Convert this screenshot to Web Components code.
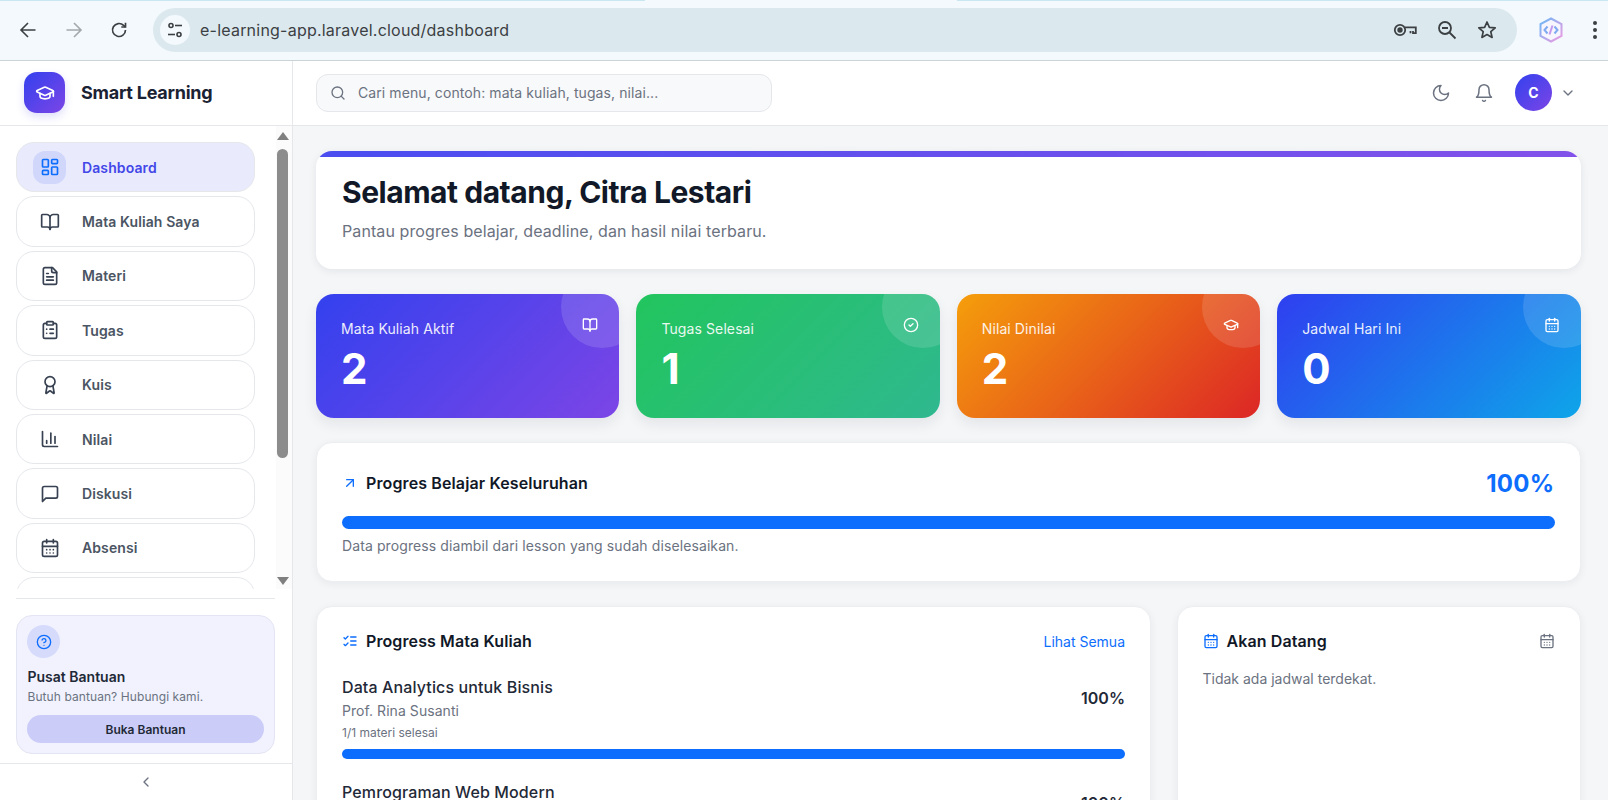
<!DOCTYPE html>
<html lang="id">
<head>
<meta charset="utf-8">
<title>Smart Learning</title>
<style>
  html, body { margin: 0; height: 100%; overflow: hidden; }
  body { font-family: Inter, "Liberation Sans", sans-serif; display: flex; flex-direction: column; background: #f5f6f8; }
</style>
</head>
<body>
<browser-bar url="e-learning-app.laravel.cloud/dashboard"></browser-bar>
<app-shell>
  <app-sidebar slot="side">
    <nav-item icon="dashboard" active>Dashboard</nav-item>
    <nav-item icon="book">Mata Kuliah Saya</nav-item>
    <nav-item icon="file">Materi</nav-item>
    <nav-item icon="clipboard">Tugas</nav-item>
    <nav-item icon="award">Kuis</nav-item>
    <nav-item icon="chart">Nilai</nav-item>
    <nav-item icon="message">Diskusi</nav-item>
    <nav-item icon="calendar">Absensi</nav-item>
    <nav-item icon="bell"></nav-item>
  </app-sidebar>
  <app-header slot="head"></app-header>
  <hero-card name="Citra Lestari">Pantau progres belajar, deadline, dan hasil nilai terbaru.</hero-card>
  <div style="display:grid;grid-template-columns:repeat(4,1fr);gap:17px;margin-top:25px">
    <stat-card label="Mata Kuliah Aktif" value="2" icon="book" bg="linear-gradient(135deg,#3341ee,#7c45e6)"></stat-card>
    <stat-card label="Tugas Selesai" value="1" icon="check" bg="linear-gradient(135deg,#22c55e,#2fb88f)"></stat-card>
    <stat-card label="Nilai Dinilai" value="2" icon="cap" bg="linear-gradient(135deg,#f59e0b,#dc2626)"></stat-card>
    <stat-card label="Jadwal Hari Ini" value="0" icon="calendar" bg="linear-gradient(135deg,#2f3ff0,#0ea5e9)"></stat-card>
  </div>
  <progress-card style="margin-top:24px" percent="100%" title="Progres Belajar Keseluruhan">Data progress diambil dari lesson yang sudah diselesaikan.</progress-card>
  <div style="display:grid;grid-template-columns:835fr 404fr;gap:25.5px;margin-top:24px">
    <panel-card title="Progress Mata Kuliah" icon="list" link="Lihat Semua">
      <course-item name="Data Analytics untuk Bisnis" teacher="Prof. Rina Susanti" done="1/1 materi selesai" percent="100%"></course-item>
      <course-item name="Pemrograman Web Modern" percent="100%"></course-item>
    </panel-card>
    <panel-card title="Akan Datang" icon="calendar" side-icon="calendar">
      <p style="margin:-6px 0 0;font-size:14px;line-height:20px;color:#6b7280">Tidak ada jadwal terdekat.</p>
    </panel-card>
  </div>
</app-shell>

<script>
const ICONS = {
  cap: '<path d="M21.42 10.922a1 1 0 0 0-.019-1.838L12.83 5.18a2 2 0 0 0-1.66 0L2.6 9.08a1 1 0 0 0 0 1.832l8.57 3.908a2 2 0 0 0 1.66 0z"/><path d="M22 10v6"/><path d="M6 12.5V16a6 3 0 0 0 12 0v-3.5"/>',
  dashboard: '<rect width="7" height="9" x="3" y="3" rx="1"/><rect width="7" height="5" x="14" y="3" rx="1"/><rect width="7" height="9" x="14" y="12" rx="1"/><rect width="7" height="5" x="3" y="16" rx="1"/>',
  book: '<path d="M12 7v14"/><path d="M3 18a1 1 0 0 1-1-1V4a1 1 0 0 1 1-1h5a4 4 0 0 1 4 4 4 4 0 0 1 4-4h5a1 1 0 0 1 1 1v13a1 1 0 0 1-1 1h-6a3 3 0 0 0-3 3 3 3 0 0 0-3-3z"/>',
  file: '<path d="M15 2H6a2 2 0 0 0-2 2v16a2 2 0 0 0 2 2h12a2 2 0 0 0 2-2V7Z"/><path d="M14 2v4a2 2 0 0 0 2 2h4"/><path d="M10 9H8"/><path d="M16 13H8"/><path d="M16 17H8"/>',
  clipboard: '<rect width="8" height="4" x="8" y="2" rx="1"/><path d="M16 4h2a2 2 0 0 1 2 2v14a2 2 0 0 1-2 2H6a2 2 0 0 1-2-2V6a2 2 0 0 1 2-2h2"/><path d="M12 11h4"/><path d="M12 16h4"/><path d="M8 11h.01"/><path d="M8 16h.01"/>',
  award: '<path d="m15.477 12.89 1.515 8.526a.5.5 0 0 1-.81.47l-3.58-2.687a1 1 0 0 0-1.197 0l-3.586 2.686a.5.5 0 0 1-.81-.469l1.514-8.526"/><circle cx="12" cy="8" r="6"/>',
  chart: '<path d="M3 3v16a2 2 0 0 0 2 2h16"/><path d="M18 17V9"/><path d="M13 17V5"/><path d="M8 17v-3"/>',
  message: '<path d="M21 15a2 2 0 0 1-2 2H7l-4 4V5a2 2 0 0 1 2-2h14a2 2 0 0 1 2 2z"/>',
  calendar: '<path d="M8 2v4"/><path d="M16 2v4"/><rect width="18" height="18" x="3" y="4" rx="2"/><path d="M3 10h18"/><path d="M8 14h.01"/><path d="M12 14h.01"/><path d="M16 14h.01"/><path d="M8 18h.01"/><path d="M12 18h.01"/><path d="M16 18h.01"/>',
  search: '<path d="m21 21-4.3-4.3"/><circle cx="11" cy="11" r="8"/>',
  moon: '<path d="M12 3a6 6 0 0 0 9 9 9 9 0 1 1-9-9Z"/>',
  bell: '<path d="M6 8a6 6 0 0 1 12 0c0 7 3 9 3 9H3s3-2 3-9"/><path d="M10.3 21a1.94 1.94 0 0 0 3.4 0"/>',
  down: '<path d="m6 9 6 6 6-6"/>',
  left: '<path d="m15 18-6-6 6-6"/>',
  help: '<circle cx="12" cy="12" r="10"/><path d="M9.09 9a3 3 0 0 1 5.83 1c0 2-3 3-3 3"/><path d="M12 17h.01"/>',
  check: '<circle cx="12" cy="12" r="10"/><path d="m9 12 2 2 4-4"/>',
  trend: '<path d="M7 7h10v10"/><path d="M7 17 17 7"/>',
  list: '<path d="m3 17 2 2 4-4"/><path d="m3 7 2 2 4-4"/><path d="M13 6h8"/><path d="M13 12h8"/><path d="M13 18h8"/>'
};
function icon(name, size, stroke) {
  return `<svg width="${size}" height="${size}" viewBox="0 0 24 24" fill="none" stroke="currentColor" stroke-width="${stroke || 2}" stroke-linecap="round" stroke-linejoin="round" style="display:block;flex:none">${ICONS[name]}</svg>`;
}

class BrowserBar extends HTMLElement {
  constructor() {
    super();
    this.attachShadow({ mode: 'open' });
  }
  connectedCallback() {
    this.shadowRoot.innerHTML = `
      <style>
        :host { display: flex; align-items: center; flex: none; height: 60px; background: linear-gradient(90deg,#c9e7f0 645px,#f3f9fd 645px,#f3f9fd 957px,#c9e7f0 957px) top / 100% 1px no-repeat #f3f9fd; border-bottom: 1px solid #c9d3d8; color: #3c4043; }
        .nav { display: flex; align-items: center; gap: 27.5px; padding-left: 19px; width: 134px; box-sizing: border-box; flex: none; }
        .omni { flex: none; width: 1364px; height: 44px; margin-left: 19px; box-sizing: border-box; border-radius: 22px; background: #dbe9ef; display: flex; align-items: center; padding: 0 20px 0 7px; }
        .tune { width: 30px; height: 30px; border-radius: 50%; background: #f3f9fd; display: flex; align-items: center; justify-content: center; }
        .url { font: 400 16px Inter, sans-serif; letter-spacing: .22px; margin-left: 10px; flex: 1; color: #3c4043; }
        .acts { display: flex; align-items: center; }
        .acts .z { margin: 0 20px; }
        .ext { margin-left: 22px; }
        .dots { margin-left: 29px; }
      </style>
      <div class="nav">
        <svg width="18" height="18" viewBox="0 0 18 18" fill="none" stroke="#3c4043" stroke-width="1.6"><path d="M16.5 9H2M9 2 2 9l7 7"/></svg>
        <svg width="18" height="18" viewBox="0 0 18 18" fill="none" stroke="#a3a8ab" stroke-width="1.6"><path d="M1.5 9H16M9 2l7 7-7 7"/></svg>
        <svg width="18" height="18" viewBox="0 0 18 18" fill="none" stroke="#3c4043" stroke-width="1.7"><path d="M15.5 9a6.5 6.5 0 1 1-1.9-4.6L15.5 6"/><path d="M15.5 1.8V6h-4.2"/></svg>
      </div>
      <div class="omni">
        <div class="tune"><svg width="18" height="18" viewBox="0 0 18 18" fill="none" stroke="#3c4043" stroke-width="1.6"><circle cx="5" cy="4.5" r="2"/><path d="M9 4.5h7"/><circle cx="13" cy="13.5" r="2"/><path d="M2 13.5h7"/></svg></div>
        <span class="url">${this.getAttribute('url')}</span>
        <div class="acts">
          <svg width="24" height="14" viewBox="0 0 24 14" fill="none" stroke="#3c4043" stroke-width="1.8"><circle cx="7" cy="7" r="5.2"/><circle cx="7" cy="7" r="1.8" fill="#3c4043"/><path d="M12 4.4h10.8v5.8H20V8M17.5 10.2V8"/></svg>
          <svg class="z" width="20" height="20" viewBox="0 0 20 20" fill="none" stroke="#3c4043" stroke-width="1.8"><circle cx="8" cy="8" r="6"/><path d="M5 8h6M12.5 12.5l6 6"/></svg>
          <svg width="20" height="20" viewBox="0 0 20 20" fill="none" stroke="#3c4043" stroke-width="1.7" stroke-linejoin="round"><path d="m10 2 2.4 5.3 5.8.6-4.4 3.8 1.3 5.7L10 14.5l-5.1 2.9 1.3-5.7L1.8 7.9l5.8-.6z"/></svg>
        </div>
      </div>
      <svg class="ext" width="24" height="26" viewBox="0 0 24 26" fill="none" stroke-width="2">
        <defs><linearGradient id="g" x1="0" y1="0" x2="1" y2="1"><stop offset="0" stop-color="#6ab8f5"/><stop offset="1" stop-color="#f29ae2"/></linearGradient></defs>
        <path d="M12 1.5 22.5 7.2v11.6L12 24.5 1.5 18.8V7.2z" stroke="url(#g)" fill="#f7f6fe"/>
        <path d="M8.5 9.5 5.5 13l3 3.5M15.5 9.5l3 3.5-3 3.5" stroke="#7fa9f0"/><path d="m13.5 8.5-3 9" stroke="#c49aee"/>
      </svg>
      <svg class="dots" width="6" height="20" viewBox="0 0 6 20" fill="#3c4043"><circle cx="3" cy="3" r="2"/><circle cx="3" cy="10" r="2"/><circle cx="3" cy="17" r="2"/></svg>
    `;
  }
}
customElements.define('browser-bar', BrowserBar);

class AppShell extends HTMLElement {
  constructor() {
    super();
    this.attachShadow({ mode: 'open' });
    this.shadowRoot.innerHTML = `
      <style>
        :host { display: flex; flex: 1; min-height: 0; overflow: hidden; }
        .main { flex: 1; min-width: 0; display: flex; flex-direction: column; }
        .content { flex: 1; min-height: 0; overflow: hidden; padding: 25px 27.5px 0 23px; }
      </style>
      <slot name="side"></slot>
      <div class="main">
        <slot name="head"></slot>
        <div class="content"><slot></slot></div>
      </div>
    `;
  }
}
customElements.define('app-shell', AppShell);

class AppSidebar extends HTMLElement {
  constructor() {
    super();
    this.attachShadow({ mode: 'open' });
    this.shadowRoot.innerHTML = `
      <style>
        :host { display: flex; flex-direction: column; flex: none; width: 293px; box-sizing: border-box; background: #fff; border-right: 1px solid #e5e7eb; }
        .brand { flex: none; height: 65px; box-sizing: border-box; display: flex; align-items: center; gap: 16px; padding: 0 24px 1px; border-bottom: 1px solid #e5e7eb; }
        .logo { width: 41px; height: 41px; border-radius: 13px; background: linear-gradient(135deg,#3341ee,#7c45e6); color: #fff; display: flex; align-items: center; justify-content: center; box-shadow: 0 4px 8px rgba(79,70,229,.18); }
        .name { font-size: 18px; font-weight: 700; color: #1a2233; letter-spacing: -.25px; }
        .mid { flex: none; height: 463px; display: flex; }
        .nav { flex: 1; min-width: 0; overflow: hidden; display: flex; flex-direction: column; gap: 4px; padding: 16px 0 0 16px; box-sizing: border-box; margin-right: 20px; }
        .bar { width: 16px; flex: none; display: flex; flex-direction: column; align-items: center; padding: 6px 3px 0 0; box-sizing: border-box; background: #fbfbfc; height: 100%; }
        .up, .dn { flex: none; width: 0; height: 0; border-left: 6px solid transparent; border-right: 6px solid transparent; }
        .up { border-bottom: 8px solid #7f7f7f; }
        .dn { border-top: 8px solid #7f7f7f; margin-top: 119px; }
        .thumb { flex: none; width: 11px; height: 309px; margin-top: 9px; border-radius: 6px; background: #8c8c8c; }
        .foot { flex: 1; margin: 9px 17px 0 16px; border-top: 1px solid #e5e7eb; padding-top: 16px; }
        .help { height: 139px; box-sizing: border-box; padding: 9px 10px; border: 1px solid #e3e5f3; border-radius: 16px; background: #f1f2fe; }
        .q { width: 33px; height: 33px; border-radius: 50%; background: #d6dafb; color: #0d6efd; display: flex; align-items: center; justify-content: center; }
        .t { font-size: 14px; font-weight: 600; color: #1f2937; margin: 9px 0 0 .5px; line-height: 20px; }
        .s { font-size: 12px; color: #6b7280; line-height: 16px; margin: 2px 0 0 .5px; letter-spacing: .08px; }
        .btn { margin-top: 10px; height: 28px; border-radius: 14px; background: #cbcdf8; color: #1f2937; font-size: 12px; font-weight: 600; display: flex; align-items: center; justify-content: center; }
        .collapse { flex: none; height: 36px; border-top: 1px solid #e5e7eb; color: #6b7280; display: flex; align-items: center; justify-content: center; }
      </style>
      <div class="brand"><div class="logo">${icon('cap', 20)}</div><div class="name">Smart Learning</div></div>
      <div class="mid">
        <div class="nav"><slot></slot></div>
        <div class="bar"><div class="up"></div><div class="thumb"></div><div class="dn"></div></div>
      </div>
      <div class="foot">
        <div class="help">
          <div class="q">${icon('help', 16)}</div>
          <div class="t">Pusat Bantuan</div>
          <div class="s">Butuh bantuan? Hubungi kami.</div>
          <div class="btn">Buka Bantuan</div>
        </div>
      </div>
      <div class="collapse">${icon('left', 16)}</div>
    `;
  }
}
customElements.define('app-sidebar', AppSidebar);

class NavItem extends HTMLElement {
  constructor() {
    super();
    this.attachShadow({ mode: 'open' });
  }
  connectedCallback() {
    this.shadowRoot.innerHTML = `
      <style>
        :host { display: flex; flex: none; width: 239px; height: 50.4px; box-sizing: border-box; align-items: center; gap: 16px; padding-left: 16px; border: 1px solid #e5e7eb; border-radius: 18px; background: #fff; color: #4b5563; font-size: 14px; font-weight: 600; letter-spacing: .1px; }
        :host([active]) { background: #e9ebfd; color: #4347e8; }
        .ic { width: 33px; height: 33px; border-radius: 12px; display: flex; align-items: center; justify-content: center; color: #374151; }
        :host([active]) .ic { background: #d1d6fb; color: #0d6efd; }
      </style>
      <div class="ic">${icon(this.getAttribute('icon'), 20, 2)}</div><span><slot></slot></span>
    `;
  }
}
customElements.define('nav-item', NavItem);

class AppHeader extends HTMLElement {
  constructor() {
    super();
    this.attachShadow({ mode: 'open' });
    this.shadowRoot.innerHTML = `
      <style>
        :host { display: flex; flex: none; height: 65px; box-sizing: border-box; align-items: center; padding: 0 0 1px 23px; background: #fff; border-bottom: 1px solid #e5e7eb; color: #6b7280; }
        .search { width: 456px; height: 38px; box-sizing: border-box; border: 1px solid #e5e7eb; border-radius: 12px; background: #f8f9fa; display: flex; align-items: center; gap: 12px; padding-left: 13px; font-size: 14px; letter-spacing: .09px; color: #6b7280; }
        .right { margin-left: auto; display: flex; align-items: center; padding-right: 32px; }
        .avatar { width: 37px; height: 37px; border-radius: 50%; background: linear-gradient(135deg,#3341ee,#7c45e6); color: #fff; font-size: 14px; font-weight: 700; display: flex; align-items: center; justify-content: center; margin: 0 8px 0 21px; }
        .bell { margin-left: 23px; }
      </style>
      <div class="search">${icon('search', 16)}<span>Cari menu, contoh: mata kuliah, tugas, nilai...</span></div>
      <div class="right">${icon('moon', 20, 1.8)}<div class="bell">${icon('bell', 20, 1.8)}</div><div class="avatar">C</div>${icon('down', 16)}</div>
    `;
  }
}
customElements.define('app-header', AppHeader);

class HeroCard extends HTMLElement {
  constructor() {
    super();
    this.attachShadow({ mode: 'open' });
  }
  connectedCallback() {
    this.shadowRoot.innerHTML = `
      <style>
        :host { display: block; height: 118px; box-sizing: border-box; background: #fff; border-radius: 16px; overflow: hidden; box-shadow: 0 2px 8px rgba(17,24,39,.08); }
        .top { height: 6px; background: linear-gradient(90deg,#4a4df0,#8252ea); }
        .in { padding: 16px 25px 0 26px; }
        h1 { margin: 0; font-size: 30px; line-height: 38px; font-weight: 700; letter-spacing: -.47px; color: #111827; }
        p { margin: 8px 0 0; font-size: 16px; line-height: 24px; letter-spacing: .1px; color: #6b7280; }
      </style>
      <div class="top"></div>
      <div class="in"><h1>Selamat datang, ${this.getAttribute('name')}</h1><p><slot></slot></p></div>
    `;
  }
}
customElements.define('hero-card', HeroCard);

class StatCard extends HTMLElement {
  constructor() {
    super();
    this.attachShadow({ mode: 'open' });
  }
  connectedCallback() {
    this.shadowRoot.innerHTML = `
      <style>
        :host { display: block; height: 124px; box-sizing: border-box; padding: 24px 25px; border-radius: 18px; overflow: hidden; position: relative; color: #fff; box-shadow: 0 6px 14px rgba(17,24,39,.08); }
        .circle { position: absolute; top: -28px; right: -24px; width: 82px; height: 82px; border-radius: 50%; background: rgba(255,255,255,.13); }
        .ic { position: absolute; top: 23px; right: 21px; }
        .l { font-size: 14px; line-height: 20px; letter-spacing: .1px; opacity: .9; margin-top: 1px; }
        .v { font-size: 42px; line-height: 48px; font-weight: 700; margin-top: 6px; }
      </style>
      <div class="circle"></div>
      <div class="ic">${icon(this.getAttribute('icon'), 16)}</div>
      <div class="l">${this.getAttribute('label')}</div>
      <div class="v">${this.getAttribute('value')}</div>
    `;
    this.style.background = this.getAttribute('bg');
  }
}
customElements.define('stat-card', StatCard);

class ProgressCard extends HTMLElement {
  constructor() {
    super();
    this.attachShadow({ mode: 'open' });
  }
  connectedCallback() {
    this.shadowRoot.innerHTML = `
      <style>
        :host { display: block; height: 140px; box-sizing: border-box; padding: 24px 25px; background: #fff; border: 1px solid #eceef1; border-radius: 16px; box-shadow: 0 2px 8px rgba(17,24,39,.06); }
        .row { display: flex; align-items: center; height: 32px; color: #0d6efd; }
        .t { font-size: 16px; font-weight: 600; color: #111827; margin-left: 8px; letter-spacing: .12px; }
        .p { margin-left: auto; font-size: 24px; font-weight: 700; letter-spacing: .3px; }
        .bar { height: 13px; border-radius: 7px; background: #0d6efd; margin-top: 17px; }
        .n { font-size: 14px; line-height: 20px; letter-spacing: .1px; color: #6b7280; margin-top: 7px; }
      </style>
      <div class="row">${icon('trend', 16)}<span class="t">${this.getAttribute('title')}</span><span class="p">${this.getAttribute('percent')}</span></div>
      <div class="bar"></div>
      <div class="n"><slot></slot></div>
    `;
  }
}
customElements.define('progress-card', ProgressCard);

class PanelCard extends HTMLElement {
  constructor() {
    super();
    this.attachShadow({ mode: 'open' });
  }
  connectedCallback() {
    const link = this.getAttribute('link');
    const side = this.getAttribute('side-icon');
    this.shadowRoot.innerHTML = `
      <style>
        :host { display: block; height: 260px; box-sizing: border-box; padding: 22px 25px; background: #fff; border: 1px solid #eceef1; border-radius: 16px; box-shadow: 0 2px 8px rgba(17,24,39,.06); }
        .row { display: flex; align-items: center; height: 24px; color: #0d6efd; margin-bottom: 22px; }
        .t { font-size: 16px; font-weight: 600; color: #111827; margin-left: 8px; letter-spacing: .1px; }
        .r { margin-left: auto; font-size: 14px; color: #0d6efd; }
        .g { margin-left: auto; color: #6b7280; }
      </style>
      <div class="row">${icon(this.getAttribute('icon'), 16)}<span class="t">${this.getAttribute('title')}</span>
        ${link ? `<span class="r">${link}</span>` : ''}${side ? `<span class="g">${icon(side, 16)}</span>` : ''}</div>
      <slot></slot>
    `;
  }
}
customElements.define('panel-card', PanelCard);

class CourseItem extends HTMLElement {
  constructor() {
    super();
    this.attachShadow({ mode: 'open' });
  }
  connectedCallback() {
    const teacher = this.getAttribute('teacher');
    const done = this.getAttribute('done');
    this.shadowRoot.innerHTML = `
      <style>
        :host { display: block; margin-bottom: 21px; }
        .top { display: flex; align-items: flex-start; }
        .a { flex: 1; }
        .n { font-size: 16px; line-height: 24px; font-weight: 500; letter-spacing: .12px; color: #1f2937; }
        .w { font-size: 14px; line-height: 20px; letter-spacing: .06px; color: #6b7280; margin-top: 2px; }
        .d { font-size: 12px; line-height: 16px; color: #6b7280; margin-top: 4px; }
        .p { font-size: 16px; line-height: 20px; font-weight: 600; color: #1f2937; margin-top: 13px; }
        .bar { height: 10px; border-radius: 5px; background: #0d6efd; margin-top: 8px; }
      </style>
      <div class="top">
        <div class="a"><div class="n">${this.getAttribute('name')}</div>
          ${teacher ? `<div class="w">${teacher}</div>` : ''}${done ? `<div class="d">${done}</div>` : ''}</div>
        <div class="p">${this.getAttribute('percent')}</div>
      </div>
      <div class="bar"></div>
    `;
  }
}
customElements.define('course-item', CourseItem);
</script>
</body>
</html>
